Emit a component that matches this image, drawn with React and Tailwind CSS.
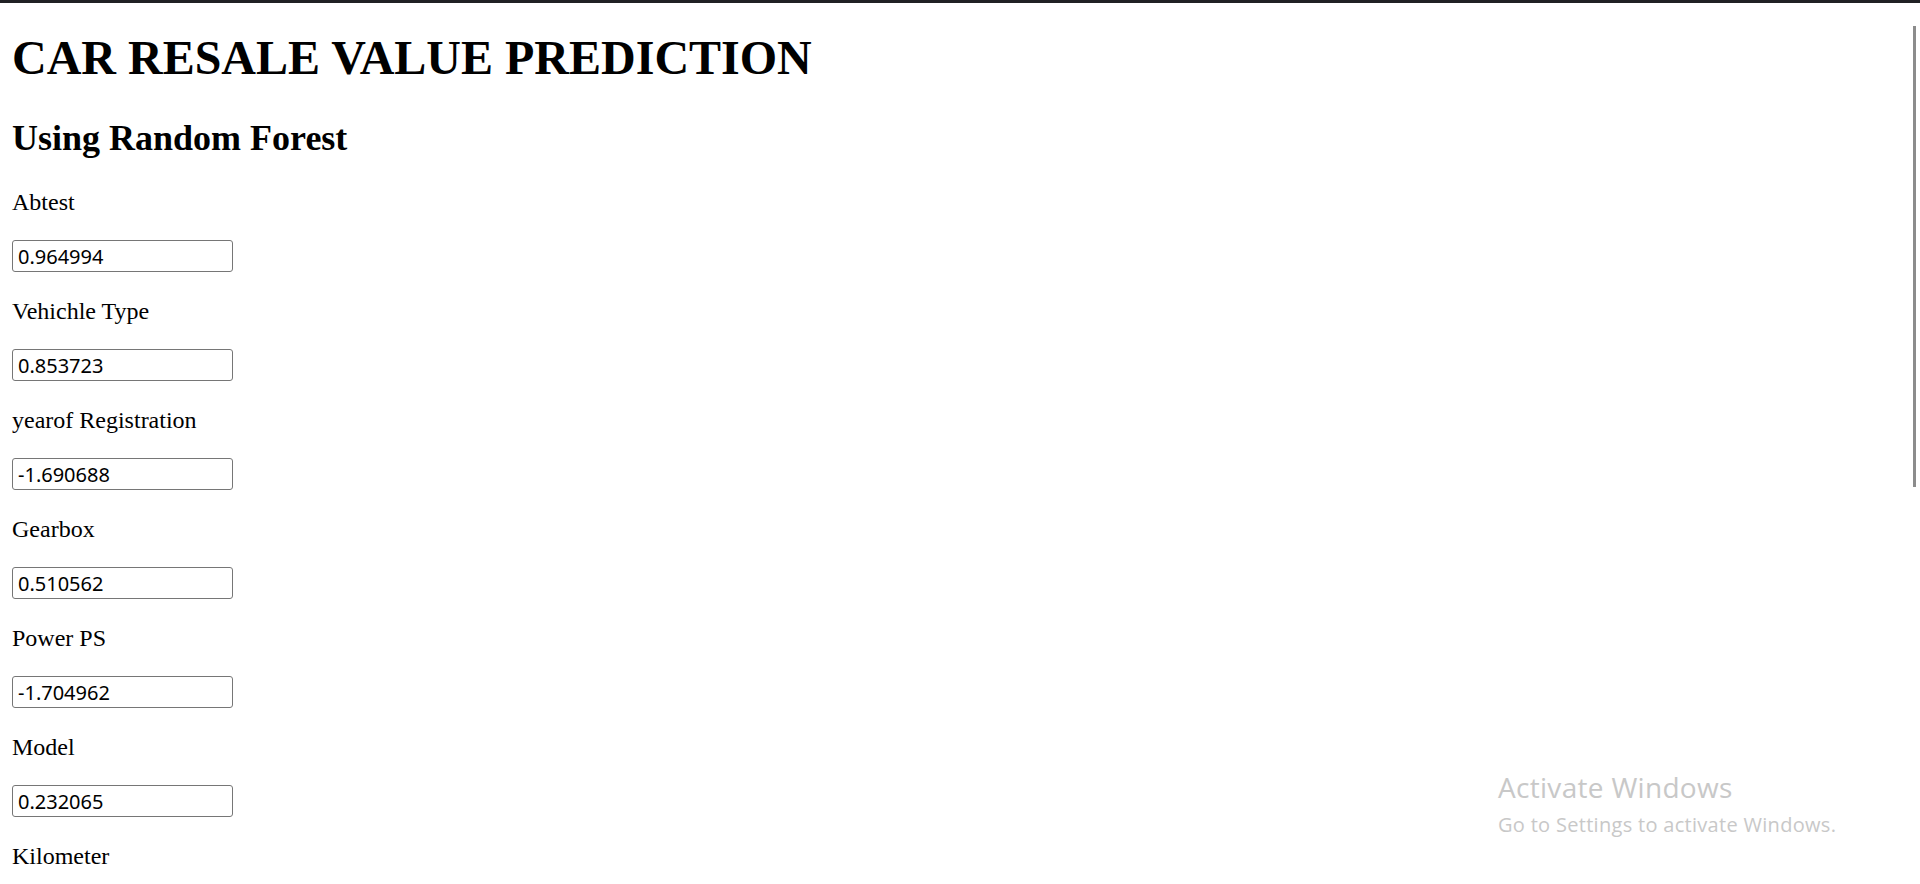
const fields = [
  { label: "Abtest", value: "0.964994" },
  { label: "Vehichle Type", value: "0.853723" },
  { label: "yearof Registration", value: "-1.690688" },
  { label: "Gearbox", value: "0.510562" },
  { label: "Power PS", value: "-1.704962" },
  { label: "Model", value: "0.232065" },
  { label: "Kilometer", value: "0.567914" },
  { label: "Month of Registration", value: "0.125347" },
];

const Field = ({ label, value }) => (
  <div className="flex flex-col">
    <p className="text-[24px] leading-[27px]">{label}</p>
    <div className="mt-[24px] h-[34px]">
      <input
        type="text"
        defaultValue={value}
        className="w-[221px] h-[32px] border border-[#767676] rounded-[3px] px-[5px] text-[20px] font-['Noto_Sans',sans-serif] text-black outline-none"
      />
    </div>
  </div>
);

export default function App() {
  return (
    <div className="relative h-[884px] overflow-hidden bg-white text-black font-['Liberation_Serif',serif]">
      <div className="h-[3px] bg-[#202124]" />

      <div className="px-[12px] flex flex-col">
        <h1 className="mt-[28px] text-[48px] leading-[53px] font-bold">
          CAR RESALE VALUE PREDICTION
        </h1>
        <h2 className="mt-[34px] text-[36px] leading-[40px] font-bold">
          Using Random Forest
        </h2>

        <div className="mt-[31px] flex flex-col gap-[24px]">
          {fields.map((f) => (
            <Field key={f.label} label={f.label} value={f.value} />
          ))}
        </div>
      </div>

      {/* overlay scrollbar thumb */}
      <div className="absolute left-[1913px] top-[26px] w-[3px] h-[461px] bg-[#8c8c8c]" />

      {/* windows watermark */}
      <div className="absolute left-[1498px] top-[770px] text-[#c8c8c8] font-['Open_Sans',sans-serif] pointer-events-none">
        <div className="text-[28px] leading-[34px] tracking-[0.3px]">Activate Windows</div>
        <div className="mt-[6px] text-[20px] leading-[30px] tracking-[0.3px]">Go to Settings to activate Windows.</div>
      </div>
    </div>
  );
}
